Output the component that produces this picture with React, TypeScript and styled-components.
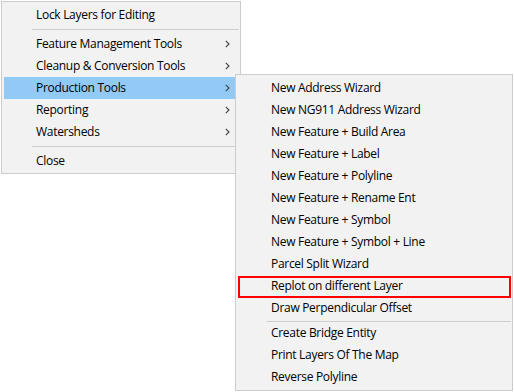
import React from "react";
import styled, { createGlobalStyle } from "styled-components";

const GlobalStyle = createGlobalStyle`
  html, body {
    margin: 0;
    padding: 0;
    background: #fff;
  }
  body {
    font-family: "Open Sans", "Noto Sans", "Liberation Sans", sans-serif;
    font-size: 12px;
    letter-spacing: -0.3px;
    color: #000;
  }
`;

const Screen = styled.div`
  position: relative;
  width: 514px;
  height: 392px;
  overflow: hidden;
`;

// black edge behind each menu, painted under both panels
const Panel = styled.div<{ $width: number; $height: number }>`
  position: relative;
  box-sizing: border-box;
  width: ${(p) => p.$width}px;
  height: ${(p) => p.$height}px;
  background: #f2f2f2;
  border: 1px solid #cccccc;
  padding: 2px 2px 1px 2px;

  &::before {
    content: "";
    position: absolute;
    inset: -2px;
    background: #000;
    z-index: -1;
  }
`;

const MainPanel = styled(Panel)`
  margin: 1px;
`;

const SubPanel = styled(Panel)`
  position: absolute;
  left: 235px;
  top: 74px;
  padding-bottom: 2px;
`;

const Item = styled.div<{ $indent: number; $active?: boolean; $marked?: boolean }>`
  position: relative;
  display: flex;
  align-items: center;
  height: 22px;
  padding-left: ${(p) => p.$indent}px;
  background: ${(p) => (p.$active ? "#91c9f7" : "transparent")};
  white-space: nowrap;

  ${(p) =>
    p.$marked &&
    `
    &::after {
      content: "";
      position: absolute;
      left: 0;
      right: -1px;
      top: 1px;
      bottom: -1px;
      border: 2px solid #ff0000;
    }
  `}
`;

const Label = styled.span`
  flex: 1;
  line-height: 22px;
`;

const Chevron = styled.svg`
  width: 5px;
  height: 8px;
  margin-right: 8px;
  flex-shrink: 0;
`;

const Separator = styled.div<{ $height: number; $line: number; $indent: number }>`
  height: ${(p) => p.$height}px;
  margin: 0 -1px 0 ${(p) => p.$indent}px;
  position: relative;

  &::after {
    content: "";
    position: absolute;
    left: 0;
    right: 0;
    top: ${(p) => p.$line}px;
    height: 1px;
    background: #cdcdcd;
  }
`;

type Entry =
  | { kind: "item"; label: string; sub?: boolean; active?: boolean; marked?: boolean }
  | { kind: "sep" };

const mainItems: Entry[] = [
  { kind: "item", label: "Lock Layers for Editing" },
  { kind: "sep" },
  { kind: "item", label: "Feature Management Tools", sub: true },
  { kind: "item", label: "Cleanup & Conversion Tools", sub: true },
  { kind: "item", label: "Production Tools", sub: true, active: true },
  { kind: "item", label: "Reporting", sub: true },
  { kind: "item", label: "Watersheds", sub: true },
  { kind: "sep" },
  { kind: "item", label: "Close" },
];

const productionItems: Entry[] = [
  { kind: "item", label: "New Address Wizard" },
  { kind: "item", label: "New NG911 Address Wizard" },
  { kind: "item", label: "New Feature + Build Area" },
  { kind: "item", label: "New Feature + Label" },
  { kind: "item", label: "New Feature + Polyline" },
  { kind: "item", label: "New Feature + Rename Ent" },
  { kind: "item", label: "New Feature + Symbol" },
  { kind: "item", label: "New Feature + Symbol + Line" },
  { kind: "item", label: "Parcel Split Wizard" },
  { kind: "item", label: "Replot on different Layer", marked: true },
  { kind: "item", label: "Draw Perpendicular Offset" },
  { kind: "sep" },
  { kind: "item", label: "Create Bridge Entity" },
  { kind: "item", label: "Print Layers Of The Map" },
  { kind: "item", label: "Reverse Polyline" },
];

function Arrow() {
  return (
    <Chevron viewBox="0 0 5 8">
      <polyline points="0.8,0.8 4,4 0.8,7.2" fill="none" stroke="#404040" strokeWidth="1.1" />
    </Chevron>
  );
}

function MenuEntries({
  entries,
  indent,
  sepHeight,
  sepLine,
}: {
  entries: Entry[];
  indent: number;
  sepHeight: number;
  sepLine: number;
}) {
  return (
    <>
      {entries.map((e, i) =>
        e.kind === "sep" ? (
          <Separator key={"sep-" + i} $height={sepHeight} $line={sepLine} $indent={indent - 4} />
        ) : (
          <Item key={e.label} $indent={indent} $active={e.active} $marked={e.marked}>
            <Label>{e.label}</Label>
            {e.sub && <Arrow />}
          </Item>
        )
      )}
    </>
  );
}

export default function App() {
  return (
    <Screen>
      <GlobalStyle />
      <MainPanel $width={240} $height={173}>
        <MenuEntries entries={mainItems} indent={32} sepHeight={7} sepLine={3} />
      </MainPanel>
      <SubPanel $width={278} $height={317}>
        <MenuEntries entries={productionItems} indent={33} sepHeight={3} sepLine={2} />
      </SubPanel>
    </Screen>
  );
}
